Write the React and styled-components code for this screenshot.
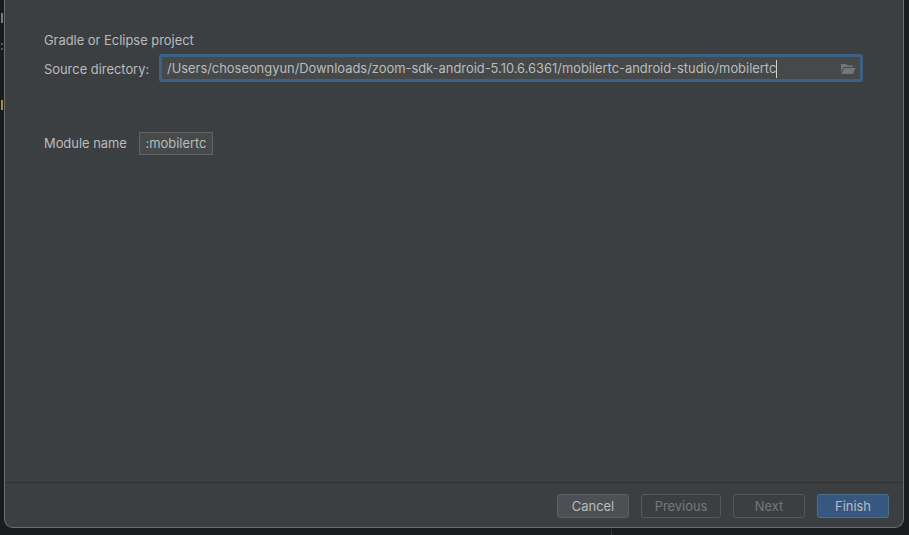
import styled, { createGlobalStyle } from "styled-components";

const Global = createGlobalStyle`
  html, body {
    margin: 0;
    padding: 0;
    background: #1a1b1c;
    font-family: Inter, "Liberation Sans", Arial, sans-serif;
    -webkit-font-smoothing: antialiased;
  }
`;

const Screen = styled.div`
  position: relative;
  width: 909px;
  height: 535px;
  overflow: hidden;
  padding-left: 4px;
  box-sizing: border-box;
  background: #1a1b1c;
`;

const Peek = styled.span`
  position: absolute;
  left: 1px;
  top: ${(p) => p.$top}px;
  width: 2px;
  height: ${(p) => p.$h}px;
  background: ${(p) => p.$color};
`;

const Divider = styled.span`
  position: absolute;
  left: 611px;
  bottom: 0;
  width: 1px;
  height: 6px;
  background: #333536;
`;

const Dialog = styled.div`
  width: 900px;
  height: 528px;
  box-sizing: border-box;
  display: flex;
  flex-direction: column;
  background: #3c3f41;
  border: 1px solid #6c6e70;
  border-top: 0;
  border-radius: 0 0 9px 9px;
`;

const Body = styled.div`
  flex: 1;
  padding: 33px 40px 0 39px;
  color: #bbbbbb;
  font-size: 12.9px;
`;

const Title = styled.div`
  height: 16px;
  line-height: 16px;
`;

const Row = styled.div`
  display: flex;
  align-items: center;
  margin-top: ${(p) => p.$top}px;
`;

const Label = styled.label`
  width: ${(p) => p.$w}px;
  flex: none;
  padding-top: ${(p) => p.$drop || 0}px;
`;

const PathField = styled.div`
  flex: 1;
  height: 28px;
  box-sizing: border-box;
  display: flex;
  align-items: center;
  justify-content: space-between;
  padding: 1px 4px 0 5px;
  background: #45494a;
  border: 3px solid #3d6185;
  border-radius: 3px;
`;

const PathText = styled.span`
  color: #bbbbbb;
  white-space: nowrap;
  border-right: 1px solid #d0d0d0;
  line-height: 18px;
`;

const ModuleField = styled.div`
  width: 74px;
  height: 23px;
  box-sizing: border-box;
  display: flex;
  align-items: center;
  justify-content: center;
  background: #45494a;
  border: 1px solid #646464;
`;

const Footer = styled.div`
  height: 45px;
  box-sizing: border-box;
  display: flex;
  justify-content: flex-end;
  gap: 12px;
  padding: 11px 14px 0 0;
  border-top: 1px solid #323232;
`;

const variants = {
  normal: "background:#4c5052;border-color:#5e6060;color:#bbbbbb;",
  disabled: "background:transparent;border-color:#555859;color:#777777;",
  primary: "background:#365880;border-color:#4c708c;color:#bbbbbb;",
};

const Button = styled.div`
  width: ${(p) => p.$w}px;
  height: 24px;
  box-sizing: border-box;
  display: flex;
  align-items: center;
  justify-content: center;
  border: 1px solid;
  border-radius: 3px;
  font-size: 12.9px;
  ${(p) => variants[p.$kind]}
`;

function FolderIcon() {
  return (
    <svg width="16" height="12" viewBox="0 0 16 12">
      <path d="M1 1 H6 L7.5 2.5 H13 V4 H3.5 L1 9.5 Z" fill="#727678" />
      <path d="M4 5 H15.5 L13 11 H1.5 Z" fill="#727678" />
    </svg>
  );
}

export default function App() {
  return (
    <Screen>
      <Global />
      <Peek $top={13} $h={10} $color="#77797b" />
      <Peek $top={43} $h={2} $color="#55623f" />
      <Peek $top={48} $h={2} $color="#55623f" />
      <Peek $top={100} $h={10} $color="#a98a4c" />
      <Divider />
      <Dialog>
        <Body>
          <Title>Gradle or Eclipse project</Title>
          <Row $top={5}>
            <Label $w={115} $drop={2}>Source directory:</Label>
            <PathField>
              <PathText>/Users/choseongyun/Downloads/zoom-sdk-android-5.10.6.6361/mobilertc-android-studio/mobilertc</PathText>
              <FolderIcon />
            </PathField>
          </Row>
          <Row $top={50}>
            <Label $w={95}>Module name</Label>
            <ModuleField>:mobilertc</ModuleField>
          </Row>
        </Body>
        <Footer>
          <Button $w={72} $kind="normal">Cancel</Button>
          <Button $w={80} $kind="disabled">Previous</Button>
          <Button $w={72} $kind="disabled">Next</Button>
          <Button $w={72} $kind="primary">Finish</Button>
        </Footer>
      </Dialog>
    </Screen>
  );
}
